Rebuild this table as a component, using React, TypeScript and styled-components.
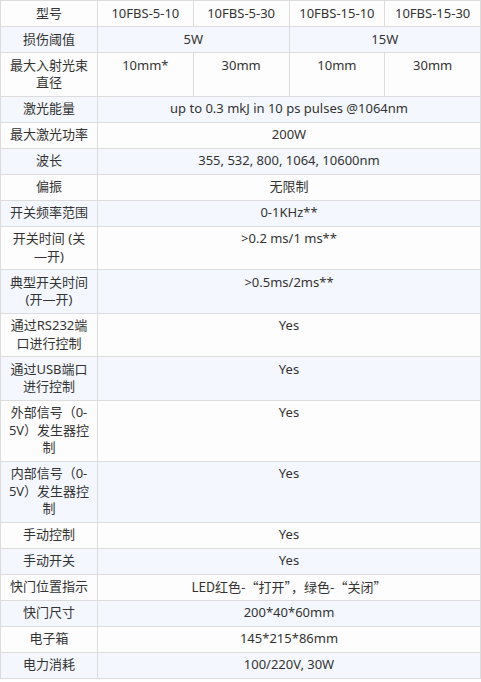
import styled, { createGlobalStyle } from 'styled-components';

const GlobalStyle = createGlobalStyle`
  body {
    margin: 0;
    background: #ffffff;
  }
`;

const SpecTable = styled.table`
  width: 481px;
  border-collapse: collapse;
  table-layout: fixed;
  font-family: "Noto Sans", "Noto Sans CJK SC", sans-serif;
  font-size: 13px;
  line-height: 17.5px;
  color: #333333;
`;

const Row = styled.tr<{ $shaded: boolean }>`
  background: ${(p) => (p.$shaded ? '#f4f8fe' : '#fdfdfd')};
`;

const Cell = styled.td<{ $cjk?: boolean }>`
  border: 1px solid #dcdcdc;
  padding: 3.75px 6px;
  text-align: center;
  vertical-align: top;
  word-break: normal;
  ${(p) => p.$cjk && 'font-family: "Noto Sans CJK SC", sans-serif;'}
`;

const LabelCell = styled(Cell)`
  width: 84px;
`;

type Spec = { label: string; cjk?: boolean; values: { text: string; span?: number }[] };

const specs: Spec[] = [
  {
    label: '型号',
    values: [
      { text: '10FBS-5-10' },
      { text: '10FBS-5-30' },
      { text: '10FBS-15-10' },
      { text: '10FBS-15-30' },
    ],
  },
  { label: '损伤阈值', values: [{ text: '5W', span: 2 }, { text: '15W', span: 2 }] },
  {
    label: '最大入射光束直径',
    values: [{ text: '10mm*' }, { text: '30mm' }, { text: '10mm' }, { text: '30mm' }],
  },
  { label: '激光能量', values: [{ text: 'up to 0.3 mkJ in 10 ps pulses @1064nm', span: 4 }] },
  { label: '最大激光功率', values: [{ text: '200W', span: 4 }] },
  { label: '波长', values: [{ text: '355, 532, 800, 1064, 10600nm', span: 4 }] },
  { label: '偏振', values: [{ text: '无限制', span: 4 }] },
  { label: '开关频率范围', values: [{ text: '0-1KHz**', span: 4 }] },
  { label: '开关时间 (关—开)', values: [{ text: '>0.2 ms/1 ms**', span: 4 }] },
  { label: '典型开关时间(开—开)', values: [{ text: '>0.5ms/2ms**', span: 4 }] },
  { label: '通过RS232端口进行控制', values: [{ text: 'Yes', span: 4 }] },
  { label: '通过USB端口进行控制', values: [{ text: 'Yes', span: 4 }] },
  { label: '外部信号（0-5V）发生器控制', values: [{ text: 'Yes', span: 4 }] },
  { label: '内部信号（0-5V）发生器控制', values: [{ text: 'Yes', span: 4 }] },
  { label: '手动控制', values: [{ text: 'Yes', span: 4 }] },
  { label: '手动开关', values: [{ text: 'Yes', span: 4 }] },
  {
    label: '快门位置指示',
    cjk: true,
    values: [{ text: 'LED红色-“打开”，绿色-“关闭”', span: 4 }],
  },
  { label: '快门尺寸', values: [{ text: '200*40*60mm', span: 4 }] },
  { label: '电子箱', values: [{ text: '145*215*86mm', span: 4 }] },
  { label: '电力消耗', values: [{ text: '100/220V, 30W', span: 4 }] },
];

const App = () => (
  <>
    <GlobalStyle />
    <SpecTable>
      <tbody>
        {specs.map((spec, i) => (
          <Row key={spec.label} $shaded={i % 2 === 1}>
            <LabelCell>{spec.label}</LabelCell>
            {spec.values.map((v, j) => (
              <Cell key={j} colSpan={v.span} $cjk={spec.cjk}>
                {v.text}
              </Cell>
            ))}
          </Row>
        ))}
      </tbody>
    </SpecTable>
  </>
);

export default App;
